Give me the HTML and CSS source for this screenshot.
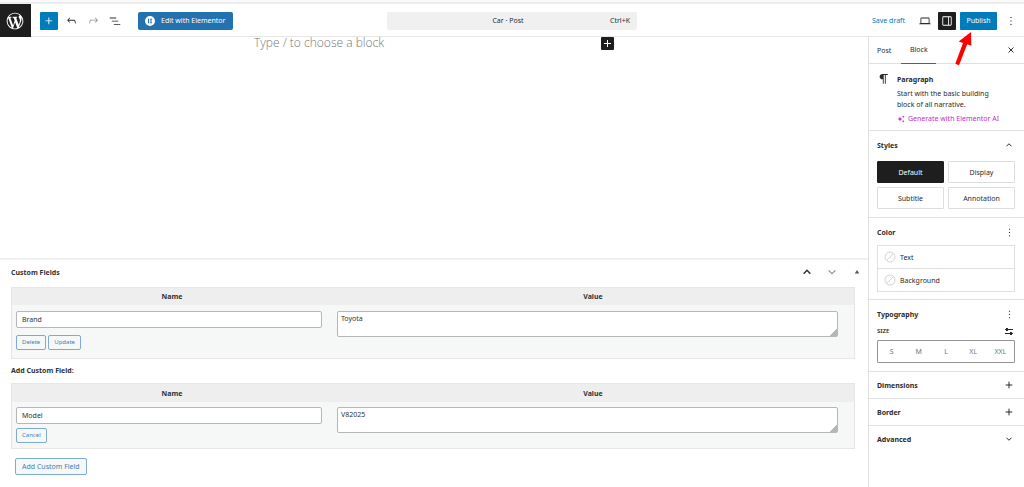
FILE: index.html
```html
<!DOCTYPE html>
<html lang="en">
<head>
<meta charset="utf-8">
<meta name="viewport" content="width=device-width, initial-scale=1">
<title>Car · Post</title>
<link rel="stylesheet" href="styles.css">
</head>
<body>
<div class="topstrip"></div>
<header class="header">
  <div class="left">
    <a class="wp-logo" href="#" aria-label="View posts">
      <svg viewBox="-2 -2 24 24" width="20" height="20"><path d="M20 10c0-5.51-4.49-10-10-10C4.48 0 0 4.49 0 10c0 5.52 4.48 10 10 10 5.51 0 10-4.48 10-10zM7.78 15.37L4.37 6.22c.55-.02 1.17-.08 1.17-.08.5-.06.44-1.13-.06-1.11 0 0-1.45.11-2.37.11-.18 0-.37 0-.58-.01C4.12 2.69 6.87 1.11 10 1.11c2.33 0 4.45.87 6.05 2.34-.68-.11-1.65.39-1.65 1.58 0 .74.45 1.36.9 2.1.35.61.55 1.36.55 2.46 0 1.49-1.4 5-1.4 5l-3.03-8.37c.54-.02.82-.17.82-.17.5-.05.44-1.25-.06-1.22 0 0-1.44.12-2.38.12-.87 0-2.33-.12-2.33-.12-.5-.03-.56 1.2-.06 1.22l.92.08 1.26 3.41zM17.41 10c.24-.64.74-1.87.43-4.25.7 1.29 1.05 2.71 1.05 4.25 0 3.29-1.73 6.24-4.4 7.78.97-2.59 1.94-5.2 2.92-7.78zM6.1 18.09C3.12 16.65 1.11 13.53 1.11 10c0-1.3.23-2.48.72-3.59C3.25 10.3 4.67 14.2 6.1 18.09zm4.03-6.63l2.58 6.98c-.86.29-1.76.45-2.71.45-.79 0-1.57-.11-2.29-.33.81-2.38 1.62-4.74 2.42-7.1z"/></svg>
    </a>
    <div class="tools">
      <button class="icon-btn blue" aria-label="Toggle block inserter"><svg viewBox="0 0 24 24" width="14" height="14"><path d="M11 12.500V17.500H12.500V12.500H17.500V11H12.500V6H11V11H6V12.500H11Z"/></svg></button>
      <button class="icon-btn" aria-label="Undo"><svg viewBox="0 0 24 24" width="13" height="13"><path d="M18.300 11.700c-.6-.6-1.400-.9-2.300-.9H6.700l2.900-3.300-1.100-1-4.500 5L8.500 16l1-1-2.700-2.700H16c.5 0 .9.2 1.300.5 1 1 1 3.400 1 4.500v.3h1.500v-.2c0-1.500 0-4.300-1.500-5.700z"/></svg></button>
      <button class="icon-btn faded" aria-label="Redo"><svg viewBox="0 0 24 24" width="13" height="13"><path d="M15.600 6.500l-1.100 1 2.900 3.300H8c-.9 0-1.700.3-2.300.9-1.400 1.500-1.400 4.200-1.400 5.600v.2h1.500v-.3c0-1.100 0-3.500 1-4.500.3-.3.7-.5 1.300-.5h9.200L14.500 15l1.100 1.100 4.600-4.600-4.600-5z"/></svg></button>
      <button class="icon-btn" aria-label="Document overview"><svg viewBox="0 0 24 24" width="14" height="14"><path d="M3 6h11v1.500H3V6Zm3.500 5.500h11V13h-11v-1.500ZM21 17H10v1.500h11V17Z"/></svg></button>
    </div>
    <button class="elementor"><svg viewBox="0 0 20 20" width="10" height="10"><path fill-rule="evenodd" d="M10 0a10 10 0 1 0 0 20a10 10 0 1 0 0-20zM6 5.500h2v9H6zM9.500 5.500H14v1.800H9.500zM9.500 9.100H14v1.800H9.500zM9.500 12.700H14v1.800H9.500z"/></svg>Edit with Elementor</button>
  </div>
  <button class="command"><span class="doc">Car · Post</span><span class="key">Ctrl+K</span></button>
  <div class="settings">
    <button class="link-btn">Save draft</button>
    <button class="icon-btn" aria-label="View"><svg viewBox="0 0 24 24" width="14" height="14"><path fill-rule="evenodd" d="M20.500 16h-.7V8c0-1.100-.9-2-2-2H6.200c-1.100 0-2 .9-2 2v8h-.7c-.8 0-1.500.7-1.500 1.500h20c0-.8-.7-1.500-1.500-1.500zM5.700 8c0-.3.2-.5.5-.5h11.600c.3 0 .5.2.5.5v7.600H5.700V8z"/></svg></button>
    <button class="icon-btn dark" aria-label="Settings"><svg viewBox="0 0 24 24" width="14" height="14"><path fill-rule="evenodd" d="M18 4H6c-1.100 0-2 .9-2 2v12c0 1.100.9 2 2 2h12c1.100 0 2-.9 2-2V6c0-1.100-.9-2-2-2zm-4 14.500H6c-.3 0-.5-.2-.5-.5V6c0-.3.2-.5.5-.5h8v13zm4.500-.5c0 .3-.2.5-.5.5h-2.500v-13H18c.3 0 .5.2.5.5v12z"/></svg></button>
    <button class="publish">Publish</button>
    <button class="dots" aria-label="Options"><svg viewBox="0 0 24 24" width="14" height="14"><path d="M13 19h-2v-2h2v2zm0-6h-2v-2h2v2zm0-6h-2V5h2v2z"/></svg></button>
    <svg class="arrow" viewBox="0 0 20 36" width="20" height="36" aria-hidden="true"><path d="M17 1L17.300 14.800L13.200 13.200L5 34.200L1.300 32.700L9 11.900L4.700 10.500Z"/></svg>
  </div>
</header>
<div class="body">
  <main class="editor">
    <section class="canvas">
      <p class="prompt">Type / to choose a block</p>
      <button class="add-block" aria-label="Add block"><svg viewBox="0 0 13 13" width="13" height="13"><path d="M6 3h1v3h3v1H7v3H6V7H3V6h3z"/></svg></button>
    </section>
    <section class="metabox">
      <div class="meta-head">
        <h2>Custom Fields</h2>
        <button class="icon-btn" aria-label="Move up"><svg viewBox="0 0 12 12" width="10" height="10"><path class="stroke" d="M2 8l4-4 4 4" stroke-width="1.800"/></svg></button>
        <button class="icon-btn faded" aria-label="Move down"><svg viewBox="0 0 12 12" width="10" height="10"><path class="stroke" d="M2 4l4 4 4-4" stroke-width="1.500"/></svg></button>
        <button class="icon-btn toggle" aria-label="Toggle panel"><svg viewBox="0 0 12 12" width="6" height="6"><path d="M6 2l4.500 7h-9z"/></svg></button>
      </div>
      <table class="fields">
        <thead><tr><th class="col-name">Name</th><th>Value</th></tr></thead>
        <tbody><tr>
          <td><input type="text" value="Brand" aria-label="Name"><div class="row-actions"><button class="small">Delete</button><button class="small">Update</button></div></td>
          <td class="value"><textarea aria-label="Value">Toyota</textarea></td>
        </tr></tbody>
      </table>
      <p class="add-title">Add Custom Field:</p>
      <table class="fields new">
        <thead><tr><th class="col-name">Name</th><th>Value</th></tr></thead>
        <tbody><tr>
          <td><input type="text" value="Model" aria-label="New name"><div class="row-actions"><button class="small">Cancel</button></div></td>
          <td class="value"><textarea aria-label="New value">V82025</textarea></td>
        </tr></tbody>
      </table>
      <button class="add-field">Add Custom Field</button>
    </section>
  </main>
  <aside class="sidebar">
    <div class="tabs">
      <button class="tab">Post</button><button class="tab active">Block</button>
      <button class="icon-btn close" aria-label="Close settings"><svg viewBox="0 0 12 12" width="10" height="10"><path class="stroke" d="M3 3l6 6M9 3l-6 6" stroke-width="1.200"/></svg></button>
    </div>
    <section class="card">
      <svg class="pilcrow" viewBox="0 0 24 24" width="14" height="14"><path d="M10 20h1.500V5h2v15H15V5h3.500V3.500H9.500C6.500 3.500 4.500 5.500 4.500 8s2 4.500 5 4.500h.5z"/></svg>
      <div>
        <h2>Paragraph</h2>
        <p>Start with the basic building block of all narrative.</p>
        <button class="ai"><svg viewBox="0 0 16 16" width="8" height="8"><path d="M6 3l1.500 3.500L11 8 7.500 9.500 6 13 4.500 9.500 1 8l3.500-1.500zM12.500 1l.8 1.700 1.700.8-1.700.8-.8 1.700-.8-1.700-1.700-.8 1.700-.8zM12.500 10l.8 1.700 1.700.8-1.700.8-.8 1.700-.8-1.700-1.700-.8 1.700-.8z"/></svg>Generate with Elementor AI</button>
      </div>
    </section>
    <section class="panel">
      <div class="panel-head"><h2>Styles</h2><button class="icon-btn" aria-label="Collapse styles"><svg viewBox="0 0 12 12" width="10" height="10"><path class="stroke" d="M3 7.500l3-3 3 3" stroke-width="1.200"/></svg></button></div>
      <div class="variations"><button class="selected">Default</button><button>Display</button><button>Subtitle</button><button>Annotation</button></div>
    </section>
    <section class="panel color">
      <div class="panel-head"><h2>Color</h2><button class="icon-btn" aria-label="Color options"><svg viewBox="0 0 24 24" width="13" height="13"><path d="M13 19h-2v-2h2v2zm0-6h-2v-2h2v2zm0-6h-2V5h2v2z"/></svg></button></div>
      <div class="colors">
        <button><svg class="swatch" viewBox="0 0 12 12" width="12" height="12"><path class="stroke" d="M2.500 9.500l7-7M6 1a5 5 0 1 0 0 10a5 5 0 1 0 0-10"/></svg>Text</button>
        <button><svg class="swatch" viewBox="0 0 12 12" width="12" height="12"><path class="stroke" d="M2.500 9.500l7-7M6 1a5 5 0 1 0 0 10a5 5 0 1 0 0-10"/></svg>Background</button>
      </div>
    </section>
    <section class="panel">
      <div class="panel-head"><h2>Typography</h2><button class="icon-btn" aria-label="Typography options"><svg viewBox="0 0 24 24" width="13" height="13"><path d="M13 19h-2v-2h2v2zm0-6h-2v-2h2v2zm0-6h-2V5h2v2z"/></svg></button></div>
      <div class="size-head"><span>SIZE</span><button class="icon-btn" aria-label="Set custom size"><svg viewBox="0 0 10 10" width="10" height="10"><path d="M1 2h1V1h2v1h5v1H4v1H2V3H1zM1 6h5V5h2v1h1v1H8v1H6V7H1z"/></svg></button></div>
      <div class="sizes"><button>S</button><button>M</button><button>L</button><button>XL</button><button>XXL</button></div>
    </section>
    <section class="panel closed"><div class="panel-head"><h2>Dimensions</h2><button class="icon-btn" aria-label="Dimensions options"><svg viewBox="0 0 12 12" width="10" height="10"><path class="stroke" d="M6 2v8M2 6h8" stroke-width="1.200"/></svg></button></div></section>
    <section class="panel closed"><div class="panel-head"><h2>Border</h2><button class="icon-btn" aria-label="Border options"><svg viewBox="0 0 12 12" width="10" height="10"><path class="stroke" d="M6 2v8M2 6h8" stroke-width="1.200"/></svg></button></div></section>
    <section class="panel closed"><div class="panel-head"><h2>Advanced</h2><button class="icon-btn" aria-label="Expand advanced"><svg viewBox="0 0 12 12" width="10" height="10"><path class="stroke" d="M3 4.500l3 3 3-3" stroke-width="1.200"/></svg></button></div></section>
  </aside>
</div>
</body>
</html>
```
FILE: styles.css
```css
* { box-sizing: border-box; }
body { margin: 0; min-height: 100vh; display: flex; flex-direction: column; background: #fff; color: #2b2b2b; font: 7px/11px "Noto Sans", "Open Sans", sans-serif; }
button, input, textarea { font: inherit; color: inherit; margin: 0; }
button { padding: 0; border: 0; background: none; white-space: nowrap; }
h2, p { margin: 0; font-size: 7px; }
svg { display: block; flex: none; fill: currentColor; }
.stroke { fill: none; stroke: currentColor; }
.topstrip { height: 4px; background: #fafafa; border-bottom: 2px solid #ececec; }

.header { display: grid; grid-template-columns: 1fr 250px 1fr; align-items: center; height: 33px; border-bottom: 1px solid #e6e6e6; }
.left { display: flex; align-items: center; }
.wp-logo { display: flex; align-items: center; justify-content: center; width: 31px; height: 33px; padding-right: 2px; background: #1e1e1e; color: #fff; }
.tools { display: flex; gap: 4px; margin-left: 9px; }
.icon-btn { display: flex; align-items: center; justify-content: center; width: 18px; height: 18px; flex: none; border-radius: 1px; }
.blue { background: #007cba; color: #fff; }
.dark { background: #1e1e1e; color: #fff; }
.faded { color: #949494; }
.elementor { display: flex; align-items: center; gap: 6px; height: 18px; margin-left: 14px; padding: 0 8px 0 7px; border-radius: 2px; background: #2271b1; color: #fff; }
.command { display: flex; align-items: center; height: 18px; padding: 0 7px 0 19px; border-radius: 2px; background: #f0f0f0; }
.doc { flex: 1; text-align: center; }
.settings { position: relative; display: flex; align-items: center; justify-content: flex-end; gap: 4px; padding-right: 6px; }
.link-btn { color: #007cba; margin-right: 7px; }
.publish { height: 18px; width: 37px; border-radius: 1px; background: #007cba; color: #fff; }
.dots { width: 14px; margin-left: 3px; }
.arrow { position: absolute; right: 50px; top: 19px; z-index: 1; color: #fe0000; }

.body { flex: 1; display: flex; }
.editor { flex: 1; min-width: 0; display: flex; flex-direction: column; }
.canvas { flex: 1; display: flex; justify-content: space-between; align-items: flex-start; width: 360px; margin: 0 auto; }
.prompt { font: 300 12px/12px "Open Sans", sans-serif; color: #777; }
.add-block { width: 13px; height: 13px; border-radius: 1px; background: #1e1e1e; color: #fff; }
.metabox { padding: 0 13px 12px 11px; border-top: 2px solid #f0f0f0; color: #2c3338; }
.meta-head { display: flex; align-items: center; gap: 7px; height: 27px; margin-right: -10px; padding-bottom: 3px; }
.meta-head h2 { flex: 1; font-size: 7px; }
.meta-head .toggle { width: 17px; color: #50575e; }
.fields { width: 100%; table-layout: fixed; border: 1px solid #e6e6e6; border-collapse: separate; border-spacing: 0; background: #f6f7f7; }
.fields th { height: 17px; padding: 0; background: #eee; }
.col-name { width: 38%; }
.fields td { padding: 6px 0 8px 4px; vertical-align: top; }
.fields input, .fields textarea { display: block; width: 97%; border: 1px solid #b4b7ba; border-radius: 2px; background: #fff; }
.fields input { height: 17px; padding: 0 5px; }
.fields textarea { height: 26px; padding: 1px 3px; resize: vertical; }
.fields textarea::-webkit-resizer { background: linear-gradient(135deg, transparent 75%, #b4b7ba 75%); }
.row-actions { display: flex; gap: 2px; margin-top: 7px; }
.small, .add-field { border: 1px solid #7fabd0; border-radius: 2px; background: #f6f7f7; color: #3c7fb5; }
.small { height: 15px; padding: 0 5px; font-size: 6px; }
.add-title { margin: 6px 0 7px; font-weight: 700; }
.new th { height: 18px; }
.new td { padding: 5px 0 5px 4px; }
.fields .value { padding-left: 5px; }
.new .row-actions { margin-top: 4px; }
.add-field { height: 17px; margin: 9px 4px 0; padding: 0 6px; }

.sidebar { width: 156px; border-left: 1px solid #e0e0e0; }
.tabs { display: flex; align-items: center; height: 27px; border-bottom: 1px solid #e0e0e0; }
.tab { height: 27px; padding: 0 10px 0 8px; }
.tab.active { width: 35px; padding: 0; border-bottom: 1px solid #007cba; }
.close { margin-left: auto; margin-right: 4px; }
.card { display: flex; gap: 6px; padding: 10px 8px 6px; }
.pilcrow { margin-top: -2px; }
.card p { width: 102px; margin-top: 3px; }
.ai { display: flex; align-items: center; gap: 3px; margin-top: 3px; color: #c52cc8; }
.panel { padding: 5px 9px 8px 8px; border-top: 1px solid #e0e0e0; }
.panel-head { display: flex; align-items: center; justify-content: space-between; height: 18px; margin-right: -3px; }
.variations { display: grid; grid-template-columns: 1fr 1fr; gap: 4px; margin-top: 7px; }
.variations button { height: 22px; border: 1px solid #ddd; border-radius: 1px; }
.variations .selected { background: #1e1e1e; border-color: #1e1e1e; color: #fff; }
.color { padding-bottom: 7px; }
.colors { margin-top: 4px; border: 1px solid #e0e0e0; }
.colors button { display: flex; align-items: center; gap: 4px; width: 100%; height: 22px; padding: 0 6px; }
.colors button + button { height: 23px; border-top: 1px solid #e0e0e0; }
.swatch { color: #d4d4d4; }
.size-head { display: flex; align-items: center; justify-content: space-between; height: 17px; margin-right: -3px; font-size: 6px; font-weight: 600; }
.sizes { display: grid; grid-template-columns: repeat(5, 1fr); height: 23px; border: 1px solid #949494; border-radius: 1px; color: #757575; }
.closed { padding-top: 4px; padding-bottom: 4px; }
```
